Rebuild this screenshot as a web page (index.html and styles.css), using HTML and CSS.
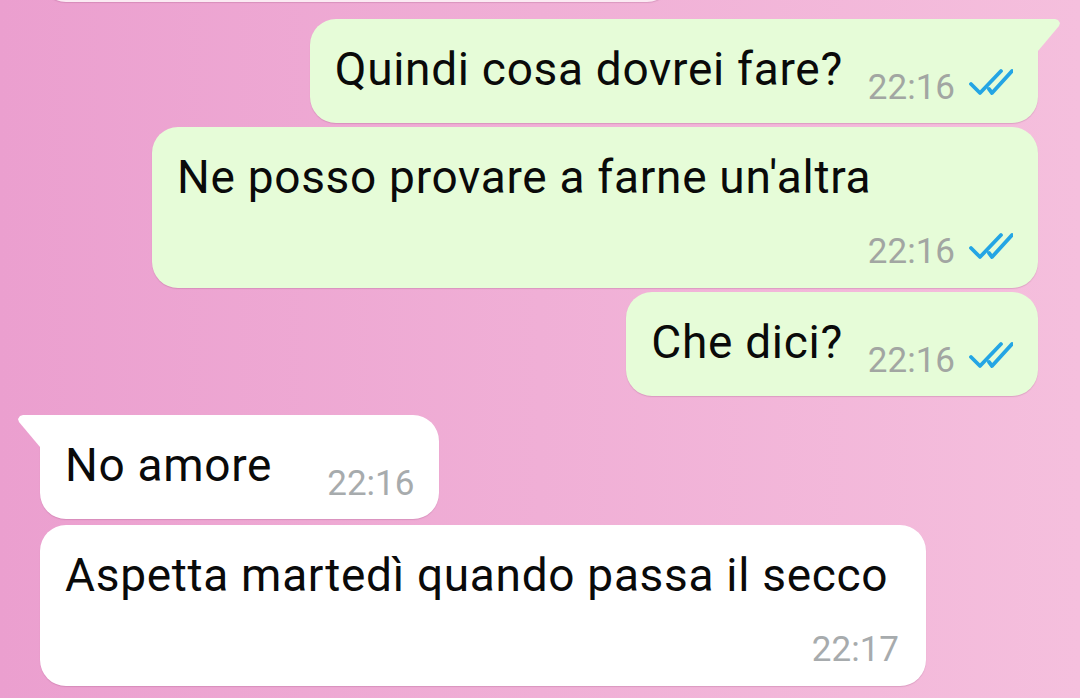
FILE: index.html
```html
<!DOCTYPE html>
<html lang="it">
<head>
  <meta charset="UTF-8" />
  <meta name="viewport" content="width=device-width, initial-scale=1.0" />
  <title>Chat</title>
  <link rel="stylesheet" href="styles.css">
</head>
<body>
  <div class="chat">
    <div class="bubble in cut"></div>

    <div class="bubble out tail first">
      <span class="text">Quindi cosa dovrei fare?</span>
      <span class="meta">22:16
        <svg class="ticks" viewBox="0 0 44 30"><path d="M2 17 L11 26 L32 4 M20 22 L23 26 L43 4" /></svg>
      </span>
    </div>

    <div class="bubble out wide">
      <div class="text">Ne posso provare a farne un'altra</div>
      <div class="meta">22:16
        <svg class="ticks" viewBox="0 0 44 30"><path d="M2 17 L11 26 L32 4 M20 22 L23 26 L43 4" /></svg>
      </div>
    </div>

    <div class="bubble out">
      <span class="text">Che dici?</span>
      <span class="meta">22:16
        <svg class="ticks" viewBox="0 0 44 30"><path d="M2 17 L11 26 L32 4 M20 22 L23 26 L43 4" /></svg>
      </span>
    </div>

    <div class="bubble in tail group">
      <span class="text">No amore</span>
      <span class="meta">22:16</span>
    </div>

    <div class="bubble in wide last">
      <div class="text">Aspetta martedì quando passa il secco</div>
      <div class="meta">22:17</div>
    </div>
  </div>
</body>
</html>
```

FILE: styles.css
```css
body {
  margin: 0;
  height: 698px;
  overflow: hidden;
  font-family: Roboto, "Noto Sans", sans-serif;
  background: linear-gradient(90deg, #eb9fcf 0%, #f0afd6 50%, #f5bfdd 100%);
}
.chat {
  display: flex;
  flex-direction: column;
  gap: 4px;
}
.bubble {
  position: relative;
  display: flex;
  align-items: flex-end;
  padding: 22px 25px 0;
  border-radius: 26px;
  box-shadow: 0 1px 1px rgba(120, 40, 90, 0.18);
}
.bubble .text {
  font-size: 46px;
  line-height: 56px;
  letter-spacing: 0.7px;
  color: #0a0a0a;
  margin-bottom: 26px;
  white-space: nowrap;
}
.meta {
  display: flex;
  align-items: flex-start;
  gap: 14px;
  height: 40px;
  font-size: 35px;
  line-height: 40px;
  color: #a2a6a2;
  margin-left: 25px;
  margin-bottom: 15px;
}
.ticks {
  width: 44px;
  height: 30px;
  margin-top: -1px;
}
.ticks path {
  fill: none;
  stroke: #24a5e4;
  stroke-width: 3.8;
  stroke-linecap: round;
  stroke-linejoin: round;
}
.out {
  align-self: flex-end;
  margin-right: 42px;
  background: #e6fcd8;
}
.in {
  align-self: flex-start;
  margin-left: 40px;
  background: #ffffff;
}
.in .meta {
  margin-left: 55px;
  color: #a7abad;
}
.wide {
  display: block;
  width: 836px;
  padding-top: 22px;
  padding-bottom: 16px;
}
.wide .text {
  margin-bottom: 27px;
}
.wide .meta {
  justify-content: flex-end;
  margin: 0;
}
.in.wide .meta {
  padding-right: 2px;
}
.cut {
  width: 633px;
  height: 60px;
  padding: 0;
  margin-top: -58px;
  background: #fbeaf3;
}
.first {
  margin-top: 13px;
}
.group {
  margin-top: 15px;
}
.last {
  margin-top: 2px;
}
.tail.out {
  border-top-right-radius: 0;
}
.tail.in {
  border-top-left-radius: 0;
}
.tail::after {
  content: "";
  position: absolute;
  top: 0;
  width: 22px;
  height: 32px;
  background: inherit;
}
.tail.out::after {
  left: 100%;
  clip-path: polygon(0 0, 17px 0, 20px 1px, 22px 4px, 21px 7px, 0 100%);
}
.tail.in::after {
  right: 100%;
  clip-path: polygon(100% 0, 5px 0, 2px 1px, 0 4px, 1px 7px, 100% 100%);
}
```
